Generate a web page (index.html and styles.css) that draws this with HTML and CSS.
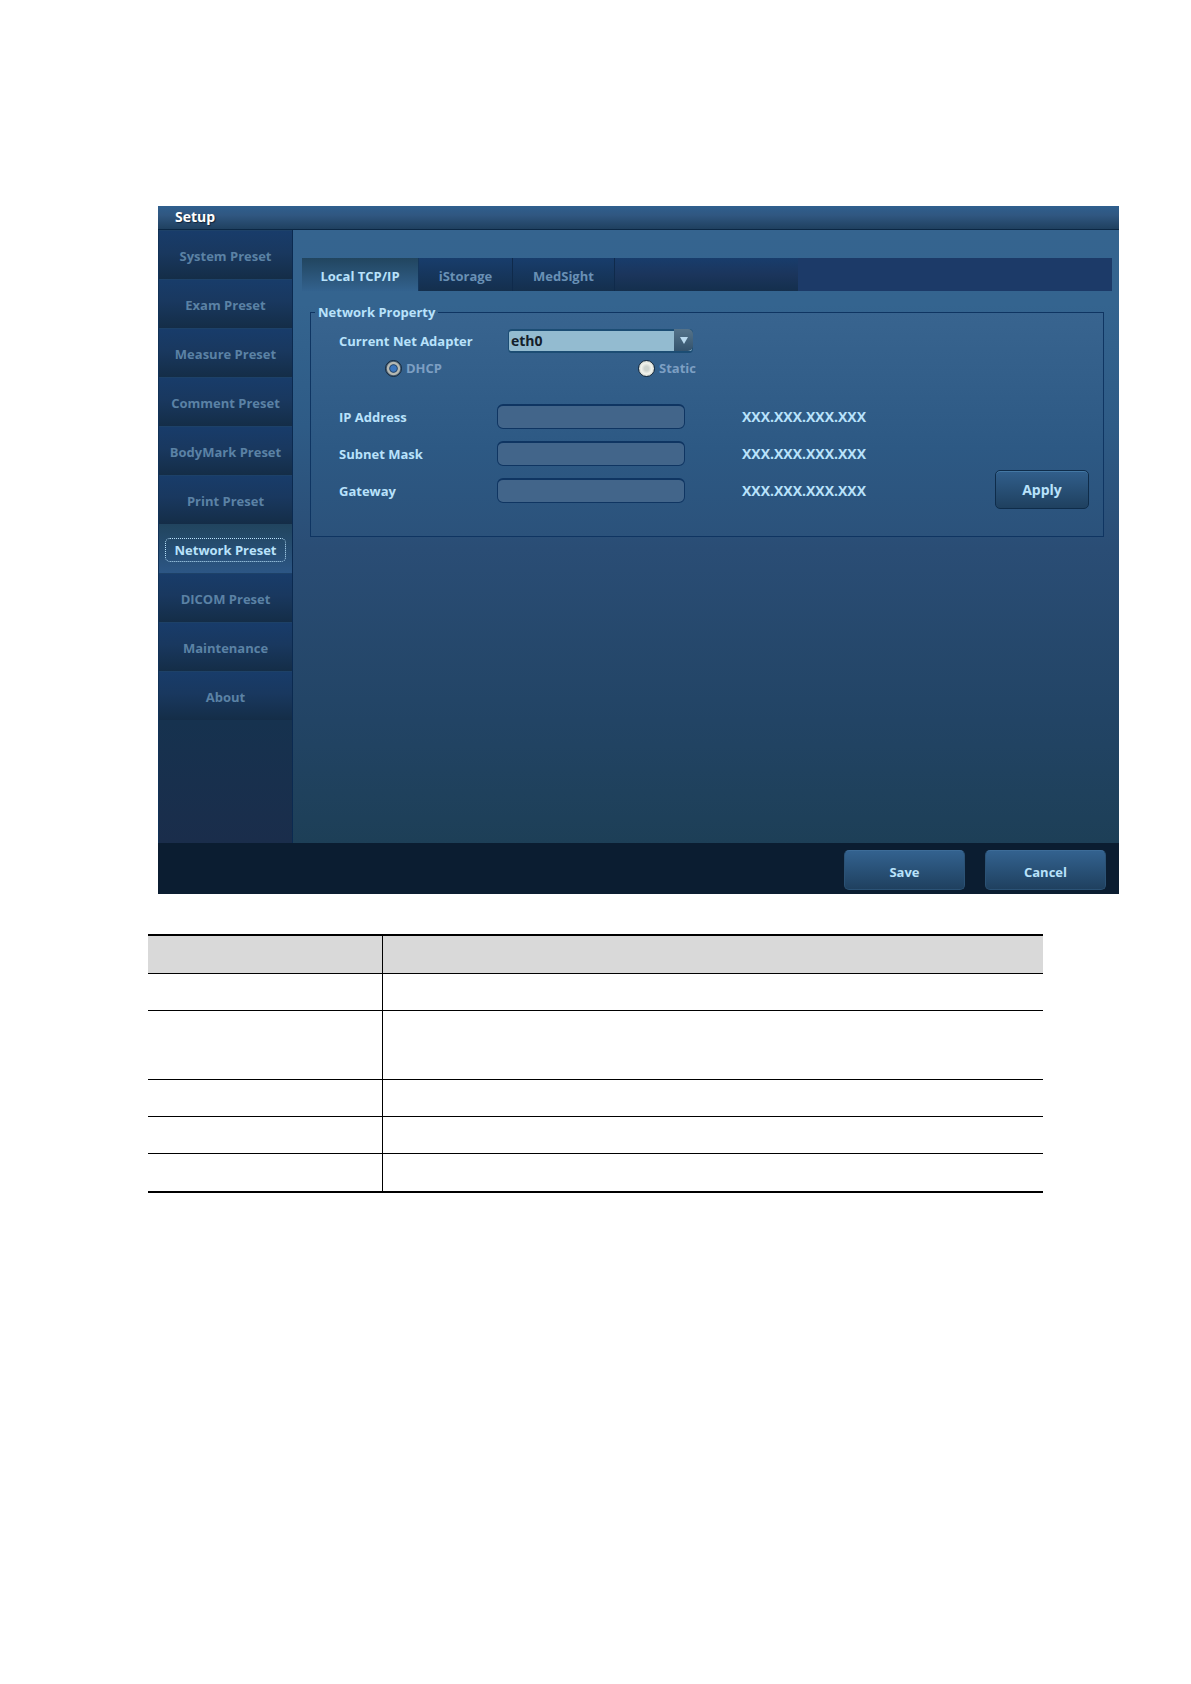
FILE: index.html
```
<!DOCTYPE html>
<html lang="en">
<head>
<meta charset="utf-8">
<title>Setup</title>
<link rel="stylesheet" href="styles.css">
</head>
<body>
<main class="page">
  <section class="setup" aria-label="Setup">
    <h1 class="title">Setup</h1>
    <div class="body">
      <nav class="sidebar">
        <button type="button" class="preset"><span>System Preset</span></button>
        <button type="button" class="preset"><span>Exam Preset</span></button>
        <button type="button" class="preset"><span>Measure Preset</span></button>
        <button type="button" class="preset"><span>Comment Preset</span></button>
        <button type="button" class="preset"><span>BodyMark Preset</span></button>
        <button type="button" class="preset"><span>Print Preset</span></button>
        <button type="button" class="preset preset-active" aria-current="page"><span>Network Preset</span></button>
        <button type="button" class="preset"><span>DICOM Preset</span></button>
        <button type="button" class="preset"><span>Maintenance</span></button>
        <button type="button" class="preset"><span>About</span></button>
      </nav>
      <div class="content">
        <div class="tabs" role="tablist">
          <button type="button" role="tab" aria-selected="true" class="tab tab-first tab-active">Local TCP/IP</button>
          <button type="button" role="tab" class="tab">iStorage</button>
          <button type="button" role="tab" class="tab tab-wide">MedSight</button>
          <span class="tab-rest"></span>
        </div>
        <fieldset class="group">
          <legend>Network Property</legend>
          <div class="panel">
            <div class="fields">
              <div class="adapter">
                <label for="adapter">Current Net Adapter</label>
                <span class="combo">
                  <select id="adapter"><option>eth0</option></select>
                  <span class="combo-arrow"><svg width="10" height="8" viewBox="0 0 10 8" aria-hidden="true"><path d="M1 1h8L5 8z" fill="#b9d9ee"/></svg></span>
                </span>
              </div>
              <div class="modes">
                <label class="mode"><input type="radio" name="mode" checked disabled>DHCP</label>
                <label class="mode"><input type="radio" name="mode" disabled>Static</label>
              </div>
              <div class="addresses">
                <label for="ip">IP Address</label><input id="ip" type="text"><span>XXX.XXX.XXX.XXX</span>
                <label for="mask">Subnet Mask</label><input id="mask" type="text"><span>XXX.XXX.XXX.XXX</span>
                <label for="gateway">Gateway</label><input id="gateway" type="text"><span>XXX.XXX.XXX.XXX</span>
              </div>
            </div>
            <button type="button" class="apply">Apply</button>
          </div>
        </fieldset>
      </div>
    </div>
    <footer class="actions">
      <button type="button" class="action">Save</button>
      <button type="button" class="action">Cancel</button>
    </footer>
  </section>
  <table class="items">
    <colgroup><col class="col-name"><col></colgroup>
    <thead><tr><th></th><th></th></tr></thead>
    <tbody>
      <tr><td></td><td></td></tr>
      <tr class="tall"><td></td><td></td></tr>
      <tr><td></td><td></td></tr>
      <tr><td></td><td></td></tr>
      <tr><td></td><td></td></tr>
    </tbody>
  </table>
</main>
</body>
</html>
```
FILE: styles.css
```
* { box-sizing: border-box; }

body {
  margin: 0;
  background: #fff;
  font: 700 13px/18px "Open Sans", "Noto Sans", sans-serif;
  color: #b9e2fb;
}

button, input, select { font: inherit; color: inherit; }

.page { padding: 206px 72px 80px 158px; }

.setup { background: #0b1d31; }

.title {
  margin: 0;
  height: 24px;
  padding-left: 17px;
  border-bottom: 1px solid #0b2744;
  background: linear-gradient(#2f5f8e, #305781 40%, #1f405f);
  color: #fff;
  font-size: 14px;
  line-height: 22px;
  text-shadow: 1px 1px 1px #10243a;
}

.body { display: flex; min-height: 613px; }

.sidebar {
  flex: none;
  width: 135px;
  display: flex;
  flex-direction: column;
  border-left: 1px solid #123257;
  border-right: 1px solid #0b2a50;
  background: linear-gradient(#173860, #16324f 80%, #1a2d4b);
}

.preset {
  height: 49px;
  padding: 2px 0 0;
  border: 0;
  border-top: 1px solid #1d4168;
  background: linear-gradient(#183c6a, #19385f 45%, #142d47);
  color: #5b82a5;
}

.preset-active {
  border-top-color: #21445f;
  background: linear-gradient(#21455f, #2c5685);
  color: #b9e2fb;
}

.preset-active span {
  display: block;
  margin: 0 6px;
  padding: 2px 0;
  border: 1px dotted #b9e2fb;
  border-radius: 5px;
}

.content {
  flex: 1;
  padding: 28px 7px 0 9px;
  background: linear-gradient(#35648f, #34648f 12%, #2e5b86 32%, #2a4d75 52%, #224465 80%, #1d3f57);
}

.tabs { display: flex; height: 33px; background: #1c3a68; }

.tab {
  width: 94px;
  padding: 2px 0 0;
  border: 0;
  border-right: 1px solid #0f2a4b;
  background: linear-gradient(#183d6c, #142f4d);
  color: #6990b5;
}

.tab-first { width: 117px; }
.tab-wide { width: 102px; }

.tab-active {
  border-right-color: #15375c;
  background: linear-gradient(#21455f, #33628e);
  color: #b9e2fb;
}

.tab-rest { width: 183px; background: linear-gradient(#183d6c, #1b355c 50%, #142f4d); }

.group {
  margin: 12px 8px 0;
  padding: 8px 14px 27px 28px;
  border: 1px solid #0f3562;
  background: linear-gradient(#38648f, #2d5984 60%, #2b527b);
}

.group legend { margin-left: -24px; padding: 0 3px; }

.panel { display: flex; justify-content: space-between; align-items: flex-end; }

.fields { padding-bottom: 6px; }

.adapter { display: flex; align-items: center; }
.adapter label { width: 169px; }

.combo { position: relative; display: block; width: 185px; height: 24px; }

.combo select {
  display: block;
  width: 100%;
  height: 100%;
  padding: 0 20px 0 2px;
  border: 2px solid #1c4d74;
  border-width: 2px 1px;
  border-radius: 4px;
  appearance: none;
  background: #93bbd0;
  color: #14202b;
  font-size: 14px;
}

.combo-arrow {
  position: absolute;
  top: 0;
  right: 0;
  width: 19px;
  height: 22px;
  display: flex;
  align-items: center;
  justify-content: center;
  border-radius: 0 5px 5px 0;
  background: linear-gradient(#55738a, #34536d);
  pointer-events: none;
}

.modes { display: flex; padding: 5px 0 0 46px; color: #7d9fc3; }

.mode { display: flex; align-items: center; gap: 4px; width: 253px; height: 20px; }

.mode input {
  width: 17px;
  height: 17px;
  margin: 0;
  border: 1px solid #16293d;
  border-radius: 50%;
  appearance: none;
  background: radial-gradient(circle, #cdd3ce 20%, #f2f3ec 50%, #d7dbd4 70%);
}

.mode input:checked {
  background: radial-gradient(circle, #3c76bd 26%, #22446b 36%, #b5b8b2 44%, #b5b8b2 58%, #54687a 66%);
}

.addresses {
  display: grid;
  grid-template-columns: 158px 188px auto;
  row-gap: 12px;
  align-items: center;
  margin-top: 26px;
}

.addresses input {
  width: 100%;
  height: 25px;
  padding: 0 6px;
  border: 1px solid #0f3562;
  border-top-width: 2px;
  border-radius: 6px;
  background: #42658a;
}

.addresses span { padding-left: 57px; font-size: 14px; }

.apply {
  width: 94px;
  height: 39px;
  padding: 0;
  border: 1px solid #0e2c4a;
  border-radius: 5px;
  background: linear-gradient(#315f8c, #1f405f);
  box-shadow: inset 0 1px 0 #4478a4;
  font-size: 14px;
}

.actions { display: flex; justify-content: flex-end; gap: 20px; height: 51px; padding: 7px 13px 4px; }

.action {
  width: 121px;
  padding: 3px 0 0;
  border: 1px solid #2b5275;
  border-top-color: #3d6c98;
  border-radius: 5px;
  background: linear-gradient(#33628f, #1f405f);
}

.items {
  width: calc(100% - 66px);
  margin: 40px 0 0 -10px;
  border-collapse: collapse;
  table-layout: fixed;
  border-top: 2px solid #000;
  border-bottom: 2px solid #000;
}

.col-name { width: 234px; }

.items th, .items td { height: 37px; padding: 0; border-bottom: 1px solid #000; }
.items th { height: 38px; background: #d9d9d9; }
.items .tall td { height: 69px; }
.items th + th, .items td + td { border-left: 1px solid #000; }
.items tr:last-child td { height: 39px; border-bottom: 2px solid #000; }
```
